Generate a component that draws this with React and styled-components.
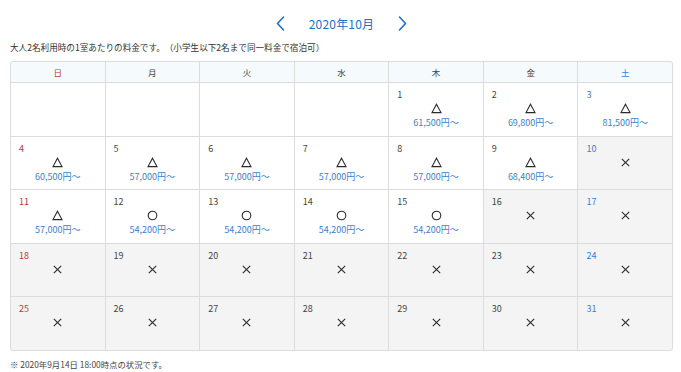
import React from "react";
import styled, { createGlobalStyle } from "styled-components";

const Global = createGlobalStyle`
  html, body { margin: 0; padding: 0; background: #fff; }
  body { font-family: "Noto Sans CJK JP", "Noto Sans", sans-serif; color: #333; text-spacing-trim: space-all; }
`;

const Page = styled.div`
  padding: 14px 8px 0 10px;
`;

const MonthNav = styled.div`
  display: flex;
  align-items: center;
  justify-content: center;
  gap: 23px;
  height: 18px;
`;

const NavButton = styled.button`
  border: 0;
  background: none;
  padding: 0;
  width: 10px;
  height: 16px;
  display: flex;
  align-items: center;
  justify-content: center;
  cursor: pointer;
`;

const MonthTitle = styled.div`
  font-size: 12px;
  color: #1f6fc6;
  letter-spacing: 0.2px;
`;

const Note = styled.p`
  margin: 9px 0 0;
  font-size: 8.6px;
  line-height: 12px;
  color: #333;
`;

const Calendar = styled.div`
  margin-top: 8px;
  display: grid;
  grid-template-columns: repeat(7, 1fr);
  grid-template-rows: 20px repeat(5, 52.6px);
  gap: 1px;
  background: #dcdcdc;
  border: 1px solid #dcdcdc;
  border-radius: 3px;
  overflow: hidden;
`;

const DayHead = styled.div`
  background: #f5fafd;
  display: flex;
  align-items: center;
  justify-content: center;
  font-size: 8.5px;
  color: ${(p) => (p.$tone === "sun" ? "#c8343a" : p.$tone === "sat" ? "#3a7fcf" : "#444")};
`;

const Cell = styled.div`
  background: ${(p) => (p.$closed ? "#f4f4f4" : "#fff")};
  padding: 6px 8px 0;
  display: flex;
  flex-direction: column;
`;

const DateNum = styled.div`
  font-size: 9px;
  line-height: 12px;
  height: 12px;
  color: ${(p) => (p.$tone === "sun" ? "#c8343a" : p.$tone === "sat" ? "#3a7fcf" : "#444")};
`;

const Mark = styled.div`
  height: 15px;
  display: flex;
  align-items: center;
  justify-content: center;
`;

const Price = styled.div`
  text-align: center;
  font-size: 9px;
  line-height: 13px;
  color: #3a7fcf;
`;

const Footnote = styled.p`
  margin: 7px 0 0;
  font-size: 8.4px;
  line-height: 12px;
  color: #444;
`;

const Chevron = ({ dir }) => (
  <svg width="9" height="15" viewBox="0 0 9 15">
    <polyline
      points={dir === "left" ? "7.5,1 1.5,7.5 7.5,14" : "1.5,1 7.5,7.5 1.5,14"}
      fill="none"
      stroke="#1f6fc6"
      strokeWidth="1.6"
      strokeLinecap="round"
      strokeLinejoin="round"
    />
  </svg>
);

const StatusIcon = ({ kind }) => (
  <svg width="11" height="11" viewBox="0 0 11 11" aria-label={kind}>
    {kind === "△" && (
      <polygon points="5.5,1.2 10,9.6 1,9.6" fill="none" stroke="#2a2a2a" strokeWidth="1.1" strokeLinejoin="miter" />
    )}
    {kind === "○" && <circle cx="5.5" cy="5.5" r="4.3" fill="none" stroke="#2a2a2a" strokeWidth="1.1" />}
    {kind === "×" && (
      <path d="M1.8 1.8 L9.2 9.2 M9.2 1.8 L1.8 9.2" fill="none" stroke="#2a2a2a" strokeWidth="1.1" />
    )}
  </svg>
);

const heads = ["日", "月", "火", "水", "木", "金", "土"];

const avail = {
  1: ["△", "61,500"],
  2: ["△", "69,800"],
  3: ["△", "81,500"],
  4: ["△", "60,500"],
  5: ["△", "57,000"],
  6: ["△", "57,000"],
  7: ["△", "57,000"],
  8: ["△", "57,000"],
  9: ["△", "68,400"],
  11: ["△", "57,000"],
  12: ["○", "54,200"],
  13: ["○", "54,200"],
  14: ["○", "54,200"],
  15: ["○", "54,200"],
};

const toneOf = (i) => (i % 7 === 0 ? "sun" : i % 7 === 6 ? "sat" : "");

export default function App() {
  const cells = [];
  for (let i = 0; i < 35; i++) {
    const day = i - 3;
    if (day < 1) {
      cells.push(<Cell key={i} />);
      continue;
    }
    const a = avail[day];
    cells.push(
      <Cell key={i} $closed={!a}>
        <DateNum $tone={toneOf(i)}>{day}</DateNum>
        <Mark>
          <StatusIcon kind={a ? a[0] : "×"} />
        </Mark>
        {a && <Price>{a[1]}円〜</Price>}
      </Cell>
    );
  }
  return (
    <Page>
      <Global />
      <MonthNav>
        <NavButton aria-label="前月">
          <Chevron dir="left" />
        </NavButton>
        <MonthTitle>2020年10月</MonthTitle>
        <NavButton aria-label="翌月">
          <Chevron dir="right" />
        </NavButton>
      </MonthNav>
      <Note>大人2名利用時の1室あたりの料金です。（小学生以下2名まで同一料金で宿泊可）</Note>
      <Calendar>
        {heads.map((h, i) => (
          <DayHead key={h} $tone={toneOf(i)}>
            {h}
          </DayHead>
        ))}
        {cells}
      </Calendar>
      <Footnote>※ 2020年9月14日 18:00時点の状況です。</Footnote>
    </Page>
  );
}
